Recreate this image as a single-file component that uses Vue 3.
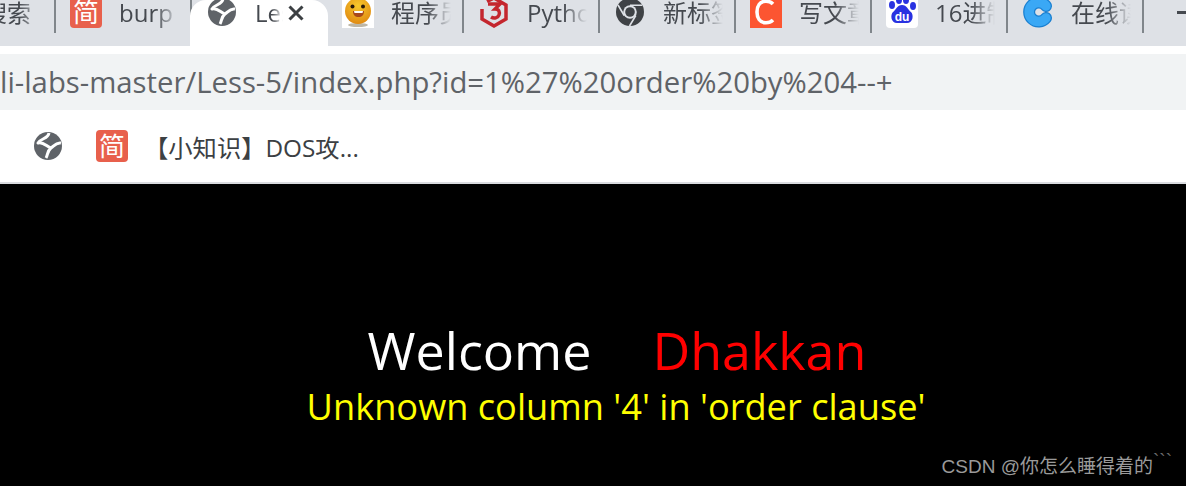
<template>
  <div class="browser">
    <div class="tabstrip">
      <div v-for="tab in tabs" :key="tab.id" class="tab" :class="{ active: tab.active }">
        <span class="favicon">
          <span v-if="tab.icon === 'jian'" class="jian">简</span>
          <svg v-else-if="tab.icon === 'globe'" viewBox="0 0 32 32" width="32" height="32">
            <circle cx="16" cy="16" r="14" fill="#5f6368" />
            <path d="M17 3C16 9 9 8 6 13C11 11 15 17 19 18M29 13C24 12 22 16 19 18C15 21 16 25 14 28" fill="none" stroke="#fff" stroke-width="3" stroke-linejoin="round" />
          </svg>
          <svg v-else-if="tab.icon === 'smile'" viewBox="0 0 32 32" width="32" height="32">
            <rect width="32" height="32" fill="#fff" />
            <ellipse cx="16" cy="29" rx="10" ry="2" fill="#bdb7a8" />
            <circle cx="16" cy="15" r="13" fill="url(#ball)" />
            <circle cx="10.500" cy="10.500" r="2" fill="#2a1a0a" />
            <circle cx="21" cy="10.500" r="2" fill="#2a1a0a" />
            <path d="M11 15h11c0 4-2 6-5.500 6s-5.500-2-5.500-6z" fill="#a8481a" />
            <path d="M12 15h9l-.5 2h-8z" fill="#fff" />
            <defs>
              <radialGradient id="ball" cx="50%" cy="30%" r="70%">
                <stop offset="0" stop-color="#f8c92c" />
                <stop offset="1" stop-color="#e08a12" />
              </radialGradient>
            </defs>
          </svg>
          <svg v-else-if="tab.icon === 'three'" viewBox="0 0 32 32" width="32" height="32">
            <path d="M9 5.500L16 2l12 7v14l-12 7-12-7V13" fill="none" stroke="#c4262e" stroke-width="3.500" />
            <path d="M10 8h12l-5 5c4 0 5 3 4 6-1 3-5 4-8 2" fill="none" stroke="#c4262e" stroke-width="3.400" />
          </svg>
          <svg v-else-if="tab.icon === 'chrome'" viewBox="0 0 32 32" width="32" height="32">
            <circle cx="16" cy="16" r="14" fill="#3f4246" />
            <circle cx="16" cy="16" r="6.800" fill="#dee1e6" />
            <circle cx="16" cy="16" r="4.800" fill="#3f4246" />
            <path d="M16 9.200h12M10.200 19.500L4 9M21.800 19.500L15.500 30" stroke="#dee1e6" stroke-width="1.600" />
          </svg>
          <span v-else-if="tab.icon === 'csdn'" class="csdn">
            <svg viewBox="0 0 32 32" width="32" height="32">
              <path d="M23 8c-2-2-4-2.800-7-2.800-6 0-9 4.800-9 10.800s3 10.800 9 10.800c3 0 5-.8 7-2.800" fill="none" stroke="#fff" stroke-width="3.600" />
            </svg>
          </span>
          <svg v-else-if="tab.icon === 'baidu'" viewBox="0 0 32 32" width="32" height="32">
            <rect width="32" height="32" rx="4" fill="#fff" />
            <ellipse cx="6" cy="9" rx="3" ry="4" fill="#2932e1" />
            <ellipse cx="13" cy="4" rx="3" ry="4" fill="#2932e1" />
            <ellipse cx="20" cy="4" rx="3" ry="4" fill="#2932e1" />
            <ellipse cx="27" cy="10" rx="3" ry="4" fill="#2932e1" />
            <path d="M16 9c5 0 6 5 9 7 3 3 2 11-4 11H11c-6 0-7-8-4-11 3-2 4-7 9-7z" fill="#2932e1" />
            <text x="16" y="25" text-anchor="middle" class="du">du</text>
          </svg>
          <svg v-else-if="tab.icon === 'c'" viewBox="0 0 32 32" width="32" height="32">
            <path d="M24 10A9.500 9.500 0 1 0 24 22" fill="none" stroke="#1a7fd0" stroke-width="12" stroke-linecap="round" />
            <path d="M24 10A9.500 9.500 0 1 0 24 22" fill="none" stroke="#3aa8f5" stroke-width="9.500" stroke-linecap="round" />
          </svg>
        </span>
        <span class="title">{{ tab.title }}</span>
        <svg v-if="tab.active" class="close" viewBox="0 0 16 16" width="16" height="16">
          <path d="M1.500 1.500l13 13M14.500 1.500l-13 13" stroke="#3c4043" stroke-width="3" />
        </svg>
      </div>
      <span class="newtab"></span>
    </div>

    <div class="gap"></div>
    <div class="urlbar">li-labs-master/Less-5/index.php?id=1%27%20order%20by%204--+</div>

    <div class="bookmarks">
      <svg viewBox="0 0 32 32" width="32" height="32">
        <circle cx="16" cy="16" r="14" fill="#5f6368" />
        <path d="M17 3C16 9 9 8 6 13C11 11 15 17 19 18M29 13C24 12 22 16 19 18C15 21 16 25 14 28" fill="none" stroke="#fff" stroke-width="3" stroke-linejoin="round" />
      </svg>
      <span class="jian bm-jian">简</span>
      <span class="bm-text">【小知识】DOS攻...</span>
    </div>

    <main class="page">
      <div class="welcome">
        <span class="white">Welcome</span>
        <span class="red">Dhakkan</span>
      </div>
      <div class="error">Unknown column '4' in 'order clause'</div>
      <div class="mark">CSDN @你怎么睡得着的<span class="dots">```</span></div>
    </main>
  </div>
</template>

<script setup>
const tabs = [
  { id: 'sou', title: '搜索', icon: null },
  { id: 'burp', title: 'burp', icon: 'jian' },
  { id: 'less', title: 'Less', icon: 'globe', active: true },
  { id: 'zhi', title: '程序员', icon: 'smile' },
  { id: 'py', title: 'Python', icon: 'three' },
  { id: 'new', title: '新标签页', icon: 'chrome' },
  { id: 'write', title: '写文章', icon: 'csdn' },
  { id: 'hex', title: '16进制', icon: 'baidu' },
  { id: 'online', title: '在线读', icon: 'c' },
]
</script>

<style>
html, body { margin: 0; background: #000; overflow: hidden; }
</style>

<style scoped>
.browser {
  width: 1186px;
  height: 486px;
  display: flex;
  flex-direction: column;
  overflow: hidden;
  font-family: "Open Sans", "Noto Sans CJK SC", sans-serif;
  background: #fff;
}
.tabstrip {
  height: 46px;
  flex: none;
  display: flex;
  background: #dee1e6;
  margin-left: -80px;
  width: 1266px;
  position: relative;
  overflow: hidden;
}
.tab {
  width: 136px;
  height: 33px;
  flex: none;
  box-sizing: border-box;
  padding-left: 14px;
  display: flex;
  align-items: flex-start;
  border-right: 2px solid #80868b;
}
.tab.active {
  background: #fff;
  height: 46px;
  width: 138px;
  margin-left: -2px;
  padding-left: 16px;
  border-right: 0;
  border-radius: 16px 16px 0 0;
}
.favicon {
  width: 32px;
  height: 32px;
  margin-top: -4px;
  flex: none;
}
.favicon svg { display: block; }
.jian {
  display: block;
  width: 32px;
  height: 32px;
  line-height: 30px;
  text-align: center;
  background: #e8604c;
  color: #fff;
  font-size: 26px;
  border-radius: 4px;
  font-family: "Noto Sans CJK SC", sans-serif;
}
.csdn { display: block; width: 32px; height: 32px; background: #fc5531; }
.du { font: 700 12px "Liberation Sans", sans-serif; fill: #fff; }
.title {
  margin-left: 17px;
  width: 60px;
  overflow: hidden;
  white-space: nowrap;
  font-size: 24px;
  line-height: 32px;
  margin-top: -3px;
  color: #45494f;
  -webkit-mask-image: linear-gradient(to right, #000 60%, transparent 100%);
  mask-image: linear-gradient(to right, #000 60%, transparent 100%);
}
.active .title { width: 28px; }
.close {
  margin-left: 5px;
  margin-top: 5px;
  flex: none;
}
.newtab {
  position: absolute;
  left: 1257px;
  top: 11px;
  width: 12px;
  height: 3px;
  background: #45494f;
}
.gap { height: 8px; flex: none; background: #fff; }
.urlbar {
  height: 56px;
  flex: none;
  background: #f1f3f4;
  line-height: 56px;
  font-size: 29.300px;
  color: #5f6368;
  white-space: nowrap;
}
.bookmarks {
  height: 74px;
  flex: none;
  box-sizing: border-box;
  border-bottom: 2px solid #dadce0;
  display: flex;
  align-items: center;
  padding-left: 32px;
  background: #fff;
}
.bm-jian { margin-left: 32px; }
.bm-text {
  margin-left: 16px;
  font-size: 24.300px;
  color: #3c4043;
}
.page {
  flex: 1;
  background: #000;
  position: relative;
  display: flex;
  flex-direction: column;
  align-items: center;
  padding-left: 46px;
  padding-top: 132px;
  box-sizing: border-box;
}
.welcome {
  display: flex;
  gap: 61px;
  margin-left: 2px;
  font-size: 52px;
  line-height: 68px;
}
.white { color: #fff; }
.red { color: #f00; }
.error {
  color: #ff0;
  font-size: 36.200px;
  line-height: 44px;
  white-space: nowrap;
}
.mark {
  position: absolute;
  right: 14px;
  bottom: 7px;
  color: #9a9a9a;
  font-size: 19px;
  line-height: 24px;
  font-family: "Liberation Sans", "Noto Sans CJK SC", sans-serif;
  white-space: nowrap;
}
.dots { position: relative; top: -6px; color: #6a6a6a; }
</style>
